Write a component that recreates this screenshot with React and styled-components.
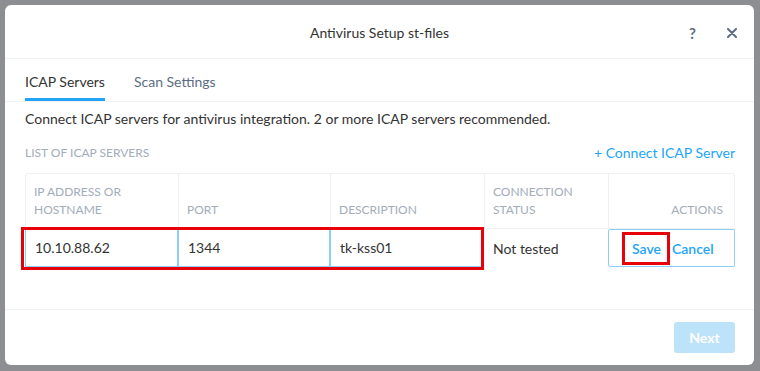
import React from "react";
import styled, { createGlobalStyle } from "styled-components";

const Global = createGlobalStyle`
  html, body {
    margin: 0;
    padding: 0;
    background: #8d8e92;
    font-family: Lato, "Open Sans", "Liberation Sans", sans-serif;
  }
`;

const Overlay = styled.div`
  width: 760px;
  height: 371px;
  padding: 5px 6px 6px 5px;
  box-sizing: border-box;
`;

const Modal = styled.div`
  background: #fff;
  border-radius: 6px;
  height: 100%;
  display: flex;
  flex-direction: column;
  overflow: hidden;
`;

const Header = styled.div`
  height: 54px;
  display: flex;
  align-items: center;
  justify-content: center;
  position: relative;
  border-bottom: 1px solid #f1f2f4;
  color: #333;
  font-size: 14px;
  padding-top: 2px;
  box-sizing: border-box;
`;

const HeaderIcons = styled.div`
  position: absolute;
  right: 17px;
  top: 2px;
  bottom: 0;
  display: flex;
  align-items: center;
  gap: 31px;
`;

const IconBtn = styled.span`
  color: #5b6d82;
  font-size: 15px;
  font-weight: 700;
  display: flex;
  align-items: center;
`;

const Tabs = styled.div`
  height: 43px;
  display: flex;
  gap: 29px;
  padding: 0 20px;
  border-bottom: 1px solid #f1f2f4;
  box-sizing: border-box;
`;

const Tab = styled.div`
  display: flex;
  align-items: center;
  font-size: 14px;
  color: ${(p) => (p.$active ? "#333" : "#5b6d82")};
  border-bottom: 3px solid ${(p) => (p.$active ? "#22a5f7" : "transparent")};
  padding-top: 5px;
`;

const Body = styled.div`
  flex: 1;
  padding: 9px 19px 0 20px;
  border-bottom: 1px solid #f1f2f4;
`;

const Desc = styled.div`
  font-size: 14px;
  color: #333;
  line-height: 16px;
`;

const ListBar = styled.div`
  display: flex;
  justify-content: space-between;
  align-items: center;
  margin-top: 17px;
  margin-bottom: 13px;
  height: 16px;
`;

const ListLabel = styled.div`
  font-size: 12px;
  color: #a2acbb;
`;

const Link = styled.span`
  font-size: 14px;
  color: #22a5f7;
`;

const TableWrap = styled.div`
  position: relative;
`;

const Grid = styled.div`
  display: grid;
  grid-template-columns: 152px 152px 154px 124px 1fr;
  border: 1px solid #eef0f3;
  border-bottom: none;
  border-radius: 3px;
`;

const HeadCell = styled.div`
  height: 55px;
  box-sizing: border-box;
  padding: 0 11px 9px 8px;
  display: flex;
  align-items: flex-end;
  justify-content: ${(p) => (p.$right ? "flex-end" : "flex-start")};
  font-size: 12px;
  line-height: 18px;
  color: #a2acbb;
  border-bottom: 1px solid #eef0f3;
  border-left: ${(p) => (p.$first ? "none" : "1px solid #eef0f3")};
`;

const InputCell = styled.div`
  height: 38px;
  box-sizing: border-box;
  border: 1px solid #8ccff6;
  margin-left: ${(p) => (p.$first ? "-1px" : "0")};
  display: flex;
  align-items: center;
  padding: 0 0 1px 9px;
  font-size: 14px;
  color: #333;
`;

const TextCell = styled.div`
  height: 38px;
  display: flex;
  align-items: center;
  padding: 0 0 1px 9px;
  font-size: 14px;
  color: #333;
`;

const ActionCell = styled.div`
  height: 38px;
  box-sizing: border-box;
  border: 1px solid #8ccff6;
  border-radius: 2px;
  margin-right: -1px;
  display: flex;
  align-items: center;
  padding-left: 23px;
  gap: 11px;
  font-size: 14px;
`;

const ActionLink = styled.span`
  color: #22a5f7;
  font-weight: 600;
  position: relative;
`;

const SaveMark = styled.span`
  position: absolute;
  left: -10px;
  right: -9px;
  top: -8px;
  bottom: -8px;
  border: 3px solid #e8000b;
`;

const RowMark = styled.div`
  position: absolute;
  left: -4px;
  width: 463px;
  bottom: -2px;
  height: 43px;
  border: 3px solid #e8000b;
  box-sizing: border-box;
`;

const Footer = styled.div`
  height: 55px;
  display: flex;
  justify-content: flex-end;
  align-items: flex-start;
  padding: 12px 19px 0 0;
  box-sizing: border-box;
`;

const NextBtn = styled.button`
  width: 61px;
  height: 31px;
  border: none;
  border-radius: 3px;
  background: #bde3fb;
  color: #fff;
  font-family: inherit;
  font-size: 14px;
  font-weight: 700;
`;

const CloseIcon = () => (
  <svg width="10" height="10" viewBox="0 0 10 10">
    <path d="M1 1 L9 9 M9 1 L1 9" stroke="#5b6d82" strokeWidth="2" strokeLinecap="round" />
  </svg>
);

export default function App() {
  return (
    <>
      <Global />
      <Overlay>
        <Modal>
          <Header>
            Antivirus Setup st-files
            <HeaderIcons>
              <IconBtn>?</IconBtn>
              <IconBtn>
                <CloseIcon />
              </IconBtn>
            </HeaderIcons>
          </Header>
          <Tabs>
            <Tab $active>ICAP Servers</Tab>
            <Tab>Scan Settings</Tab>
          </Tabs>
          <Body>
            <Desc>
              Connect ICAP servers for antivirus integration. 2 or more ICAP servers recommended.
            </Desc>
            <ListBar>
              <ListLabel>LIST OF ICAP SERVERS</ListLabel>
              <Link>+ Connect ICAP Server</Link>
            </ListBar>
            <TableWrap>
              <Grid>
                <HeadCell $first>
                  IP ADDRESS OR
                  <br />
                  HOSTNAME
                </HeadCell>
                <HeadCell>PORT</HeadCell>
                <HeadCell>DESCRIPTION</HeadCell>
                <HeadCell>
                  CONNECTION
                  <br />
                  STATUS
                </HeadCell>
                <HeadCell $right>ACTIONS</HeadCell>
                <InputCell $first>10.10.88.62</InputCell>
                <InputCell>1344</InputCell>
                <InputCell>tk-kss01</InputCell>
                <TextCell>Not tested</TextCell>
                <ActionCell>
                  <ActionLink>
                    Save
                    <SaveMark />
                  </ActionLink>
                  <ActionLink>Cancel</ActionLink>
                </ActionCell>
              </Grid>
              <RowMark />
            </TableWrap>
          </Body>
          <Footer>
            <NextBtn>Next</NextBtn>
          </Footer>
        </Modal>
      </Overlay>
    </>
  );
}
